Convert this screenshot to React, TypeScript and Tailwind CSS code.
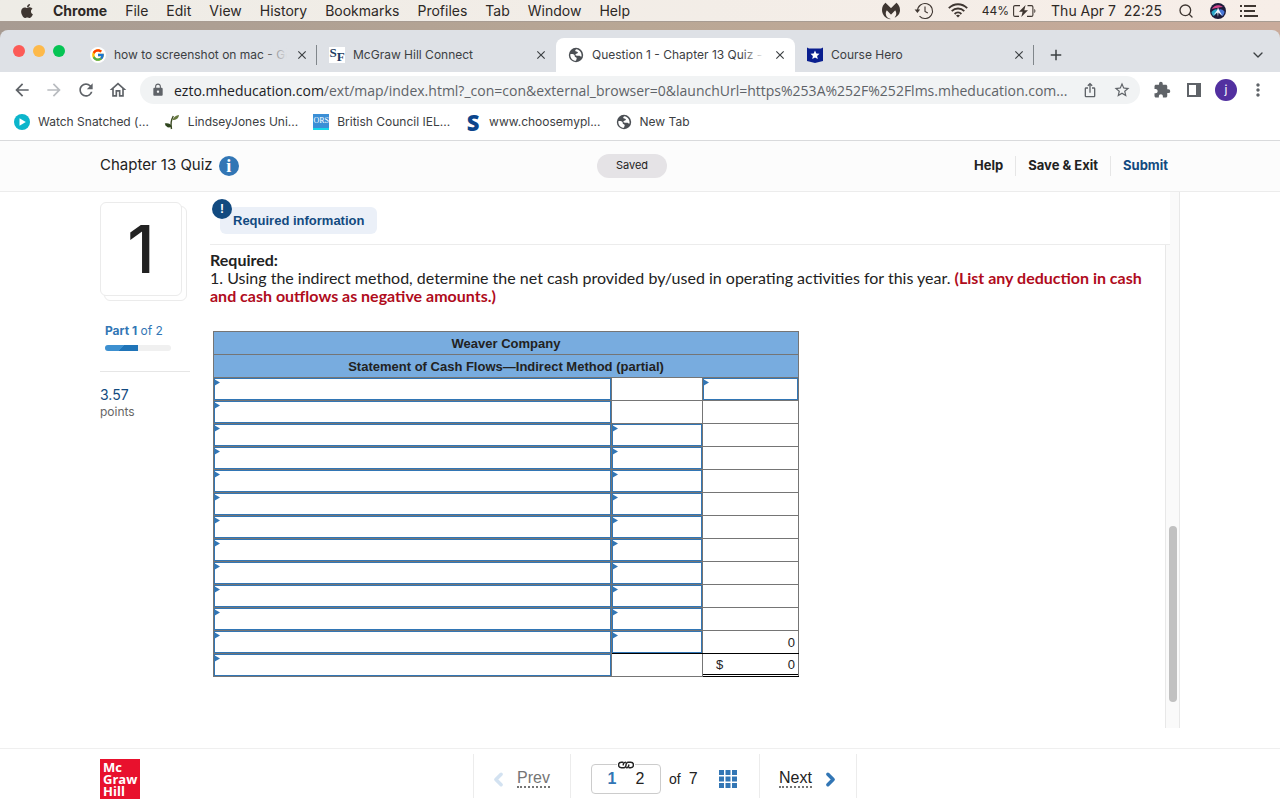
import { useState } from "react";
import type { ReactNode } from "react";
import clsx from "clsx";
import { FaApple } from "react-icons/fa";
import { FcGoogle } from "react-icons/fc";
import {
  MdAdd,
  MdArrowBack,
  MdArrowForward,
  MdClose,
  MdExtension,
  MdIosShare,
  MdLock,
  MdMoreVert,
  MdOutlineHome,
  MdRefresh,
  MdStarBorder,
} from "react-icons/md";
import { SiMalwarebytes } from "react-icons/si";
import { ChevronDown, ChevronLeft, ChevronRight, Search } from "lucide-react";

const menus = ["File", "Edit", "View", "History", "Bookmarks", "Profiles", "Tab", "Window", "Help"];

function GlobeIcon() {
  return (
    <svg viewBox="0 0 16 16" className="size-4 shrink-0">
      <circle cx="8" cy="8" r="7.2" fill="#4b4f54" />
      <path d="M8.2 2.2c-.9.6-1.3 1.6-.6 2.1.9.6 2.2.1 2.3 1.3.1 1-1.6 1-2.3 1.6-.6.6.3 1.500 1.300 1.500h2.100c1.200 0 1.500 1 2.600.7.300-2.800-1.200-6.600-5.400-7.200z" fill="#fff" />
      <path d="M2.300 7.200c1.400-.4 3.300-.2 4.100.8.7.9-.1 1.400.8 1.900.9.400 1.500.5 1.500 1.500 0 .9-.7 1.200-.6 2.300-3.300.2-6-2.500-5.800-6.500z" fill="#fff" />
    </svg>
  );
}

function SfIcon() {
  return (
    <span className="flex size-4 shrink-0 justify-center bg-white font-['Liberation_Serif',serif] text-[13px] font-bold leading-3 text-[#1d3c63]">
      <span className="self-start">S</span>
      <span className="self-end">F</span>
    </span>
  );
}

function ShieldIcon() {
  return (
    <svg viewBox="0 0 16 16" className="size-4 shrink-0">
      <path d="M0 0.500l2 1h12l2-1v13.500L8 16 0 14z" fill="#0a1f8f" />
      <path d="M8 3.500l1.300 3 3.200.3-2.400 2.100.7 3.200L8 10.400l-2.800 1.700.7-3.200-2.400-2.100 3.200-.3z" fill="#fff" />
    </svg>
  );
}

function PlayIcon() {
  return (
    <svg viewBox="0 0 16 16" className="size-4 shrink-0">
      <circle cx="8" cy="8" r="8" fill="#0cb5cb" />
      <path d="M5.500 4.200v7.600L11.800 8z" fill="#fff" />
    </svg>
  );
}

function LeafIcon() {
  return (
    <svg viewBox="0 0 16 16" className="size-4 shrink-0">
      <path d="M7.500 15C6.600 11 7 6 9.300 2" fill="none" stroke="#3b4a22" strokeWidth="1.400" />
      <path d="M8.500 6c1-3 3.500-4.600 6.500-5-.3 3-2.500 5-6.500 5z" fill="#66783f" />
      <path d="M7.500 12.500C6.800 9.500 4 9 .8 9.500 1.800 13 4.500 14.500 7.500 12.500z" fill="#2f451e" />
    </svg>
  );
}

function OrsIcon() {
  return (
    <span className="flex h-4 w-4 shrink-0 items-center justify-center border-b-2 border-[#18d7ea] bg-[#3b8fd6] font-['Liberation_Serif',serif] text-[8px] leading-none text-white">
      ORS
    </span>
  );
}

function SIcon() {
  return (
    <span className="block w-4 shrink-0 text-center font-['Open_Sans',sans-serif] text-[22px] font-extrabold leading-4 text-[#0b458c]">S</span>
  );
}

function HistoryIcon() {
  return (
    <svg viewBox="0 0 20 18" className="h-[18px] w-5" fill="none" stroke="#3e3631" strokeWidth="1.100">
      <path d="M3.500 9a7.500 7.500 0 1 1 2 5.100" />
      <path d="M11 4.500V9.500l2.800 1.500" />
      <path d="M.6 7.500h5.600L3.400 11z" fill="#3e3631" stroke="none" />
    </svg>
  );
}

function WifiIcon() {
  return (
    <svg viewBox="0 0 20 15" className="h-[15px] w-5" fill="none" stroke="#3e3631" strokeWidth="1.800">
      <path d="M.8 5.200C6-.1 14-.1 19.200 5.200" />
      <path d="M3.700 8.200c3.500-3.600 9.100-3.600 12.600 0" />
      <path d="M6.600 11c2-2 4.800-2 6.800 0" />
      <path d="M8 12.400c1.200-1 2.800-1 4 0L10 14.600z" fill="#3e3631" stroke="none" />
    </svg>
  );
}

function BatteryIcon() {
  return (
    <svg viewBox="0 0 24 12" className="h-3 w-6" fill="none" stroke="#3e3631" strokeWidth="1.100">
      <path d="M7 .6H2A1.400 1.400 0 0 0 .6 2v8A1.400 1.400 0 0 0 2 11.400h4" />
      <path d="M14.500.6h4A1.400 1.400 0 0 1 19.900 2v8a1.400 1.400 0 0 1-1.400 1.400H14" />
      <path d="M12.600 0L6 6.800h3.600L8.300 12 15 5.200h-3.700z" fill="#3e3631" stroke="none" />
      <path d="M21.300 4v4c1.400-.4 1.400-3.600 0-4z" fill="#3e3631" stroke="none" />
    </svg>
  );
}

function SiriIcon() {
  return (
    <svg viewBox="0 0 16 16" className="size-4">
      <circle cx="8" cy="8" r="8" fill="#1c1b3a" />
      <path d="M1.800 6C4 2 9 1 13 4c-3 .5-7 .5-11.200 2z" fill="#d7468c" />
      <path d="M1.500 9c3-3 5-3.500 6.500-1.500C7 10 5 12.500 3.500 13 2 11.500 1.500 10.500 1.500 9z" fill="#2aa7c9" />
      <path d="M14.500 8.500C12 6 10 5.500 8 7.500c1 3 3 5 4.500 5.500 1.200-1.200 1.900-2.500 2-4.500z" fill="#4876d6" />
      <path d="M8 4.500l1.500 3.500L12.500 13 8.500 9.500 8 14l-.8-4.500L3.500 12 7 7.500z" fill="#eef6ff" />
    </svg>
  );
}

function ListIcon() {
  return (
    <svg viewBox="0 0 18 12" className="h-3 w-[18px]" fill="#3e3631">
      <path d="M0 0h2v2H0zM0 5h2v2H0zM0 10h2v2H0zM4 0h12v2H4zM4 5h11v2H4zM4 10h14v2H4z" />
    </svg>
  );
}

function LinkIcon() {
  return (
    <svg viewBox="0 0 16 8" className="h-2 w-4" fill="none" stroke="#222" strokeWidth="1.400" strokeLinecap="round">
      <path d="M5.200 3.900C5.200 2.200 6 1.200 7.500 1.200" />
      <path d="M5 1.200H3.300a2.700 2.700 0 0 0 0 5.500h2.500C7.300 6.700 8 5.500 8 4s.7-2.800 2.200-2.800h2.500a2.700 2.700 0 0 1 0 5.500H11" />
      <path d="M10.800 4c0 1.700-.8 2.700-2.300 2.700" />
    </svg>
  );
}

function MacMenuBar() {
  return (
    <div className="flex h-[22px] items-center justify-between border-b border-[#a89c92] bg-linear-to-r from-[#eeece6] to-[#f7eee8] pl-[19px] pr-[22px] text-[14px] text-[#2d2825]">
      <nav className="flex items-center gap-[18px]">
        <FaApple className="size-4 text-[#3e3631]" />
        <button className="font-bold">Chrome</button>
        {menus.map((m) => (
          <button key={m}>{m}</button>
        ))}
      </nav>
      <div className="flex items-center gap-[14px]">
        <SiMalwarebytes className="size-[18px] text-[#3e3631]" />
        <HistoryIcon />
        <WifiIcon />
        <span className="flex items-center gap-1 text-[12px]">
          44% <BatteryIcon />
        </span>
        <span className="whitespace-pre">Thu Apr 7  22:25</span>
        <Search className="mx-[2px] size-4 text-[#3e3631]" strokeWidth={2} />
        <SiriIcon />
        <ListIcon />
      </div>
    </div>
  );
}

type TabProps = { icon: ReactNode; title: string; active?: boolean; divider?: boolean; fade?: boolean };

function BrowserTab({ icon, title, active, divider, fade }: TabProps) {
  return (
    <div
      className={clsx(
        "relative flex h-[34px] max-w-[239px] flex-1 items-center gap-2 pl-3 pr-2",
        active && "rounded-t-lg bg-white",
      )}
    >
      {icon}
      <button className="relative min-w-0 flex-1 overflow-hidden whitespace-nowrap text-left text-[12px] text-[#3c4043]">
        {title}
        {fade && (
          <span
            className={clsx(
              "absolute inset-y-0 right-0 w-6 bg-linear-to-r from-transparent",
              active ? "to-white" : "to-[#dee1e6]",
            )}
          />
        )}
      </button>
      <button aria-label={`Close ${title}`}>
        <MdClose className="size-[14px] text-[#3c4043]" />
      </button>
      {divider && <span className="absolute right-0 top-[7px] h-5 w-px bg-[#80868b]" />}
    </div>
  );
}

function TabStrip() {
  return (
    <div className="flex h-[42px] items-end rounded-t-lg bg-[#dee1e6]">
      <div className="flex w-[78px] shrink-0 gap-2 self-center pl-[13px]">
        <span className="size-3 rounded-full bg-[#fc5b57]" />
        <span className="size-3 rounded-full bg-[#fdb94a]" />
        <span className="size-3 rounded-full bg-[#05c454]" />
      </div>
      <BrowserTab
        icon={
          <span className="flex size-4 shrink-0 items-center justify-center rounded-full bg-white">
            <FcGoogle className="size-[14px]" />
          </span>
        }
        title="how to screenshot on mac - Go"
        divider
        fade
      />
      <BrowserTab icon={<SfIcon />} title="McGraw Hill Connect" />
      <BrowserTab icon={<GlobeIcon />} title="Question 1 - Chapter 13 Quiz -" active fade />
      <BrowserTab icon={<ShieldIcon />} title="Course Hero" divider />
      <button aria-label="New tab" className="flex h-[34px] w-11 items-center justify-center">
        <MdAdd className="size-[18px] text-[#3c4043]" />
      </button>
      <button aria-label="Search tabs" className="ml-auto flex h-[34px] w-11 items-center justify-center">
        <ChevronDown className="size-4 text-[#3c4043]" />
      </button>
    </div>
  );
}

function ToolButton({ label, children }: { label: string; children: ReactNode }) {
  return (
    <button aria-label={label} className="flex h-7 w-8 shrink-0 items-center justify-center text-[#5f6368]">
      {children}
    </button>
  );
}

function Toolbar() {
  return (
    <div className="flex h-9 items-center bg-white px-[6px]">
      <ToolButton label="Back"><MdArrowBack className="size-5" /></ToolButton>
      <ToolButton label="Forward"><MdArrowForward className="size-5 text-[#b9bcc0]" /></ToolButton>
      <ToolButton label="Reload"><MdRefresh className="size-5" /></ToolButton>
      <ToolButton label="Home"><MdOutlineHome className="size-5" /></ToolButton>
      <div className="mx-[6px] flex h-7 min-w-0 flex-1 items-center rounded-full bg-[#f1f3f4] pl-[11px] pr-[2px]">
        <MdLock className="size-[14px] shrink-0 text-[#5f6368]" />
        <div className="ml-[9px] min-w-0 flex-1 truncate font-['Open_Sans',sans-serif] text-[14px] text-[#5f6368]">
          <span className="text-[#202124]">ezto.mheducation.com</span>
          /ext/map/index.html?_con=con&amp;external_browser=0&amp;launchUrl=https%253A%252F%252Flms.mheducation.com...
        </div>
        <ToolButton label="Share"><MdIosShare className="size-4" /></ToolButton>
        <ToolButton label="Bookmark this tab"><MdStarBorder className="size-[18px]" /></ToolButton>
      </div>
      <ToolButton label="Extensions"><MdExtension className="size-[18px]" /></ToolButton>
      <ToolButton label="Side panel">
        <svg viewBox="0 0 14 14" className="size-[14px]">
          <path d="M0 0h14v14H0zM2 2v10h7V2z" fill="currentColor" fillRule="evenodd" />
        </svg>
      </ToolButton>
      <ToolButton label="Profile">
        <span className="flex size-[22px] items-center justify-center rounded-full bg-[#5230a0] text-[12px] text-white">j</span>
      </ToolButton>
      <ToolButton label="Menu"><MdMoreVert className="size-5" /></ToolButton>
    </div>
  );
}

const bookmarks = [
  { title: "Watch Snatched (...", icon: <PlayIcon /> },
  { title: "LindseyJones Uni...", icon: <LeafIcon /> },
  { title: "British Council IEL...", icon: <OrsIcon /> },
  { title: "www.choosemypl...", icon: <SIcon /> },
  { title: "New Tab", icon: <GlobeIcon /> },
];

function BookmarksBar() {
  return (
    <div className="flex h-[33px] items-center gap-[15px] border-b border-[#d9dadc] bg-white pb-1 pl-[14px] text-[12px] text-[#3c4043]">
      {bookmarks.map((b) => (
        <a key={b.title} href="#" className="flex items-center gap-2 whitespace-nowrap">
          {b.icon}
          {b.title}
        </a>
      ))}
    </div>
  );
}

function QuizHeader() {
  return (
    <header className="border-b border-[#ececec] bg-[#fcfcfc]">
      <div className="mx-[100px] grid h-[50px] grid-cols-[1fr_auto_1fr] items-center pr-3">
        <div className="flex items-center gap-[6px] pb-px text-[15px]">
          <h1>Chapter 13 Quiz</h1>
          <button
            aria-label="Assignment information"
            className="flex size-5 items-center justify-center rounded-full bg-[#3276b5] font-['Liberation_Serif',serif] text-[18px] font-bold leading-none text-white"
          >
            i
          </button>
        </div>
        <span className="mr-1 flex h-6 w-[70px] items-center justify-center rounded-full bg-[#e5e3e6] pb-[2px] text-[11px]">Saved</span>
        <div className="flex h-5 items-center justify-end divide-x divide-[#e6e6e6] text-[13px] font-bold">
          <button className="pr-3">Help</button>
          <button className="px-3">Save &amp; Exit</button>
          <button className="pl-3 text-[#124a80]">Submit</button>
        </div>
      </div>
    </header>
  );
}

function QuestionSidebar() {
  return (
    <aside className="w-[90px] shrink-0 pt-[10px]">
      <div className="relative h-[99px] w-[87px]">
        <div className="absolute bottom-0 right-0 h-[95px] w-[83px] rounded-md border border-[#ebebeb]" />
        <div className="absolute left-0 top-0 flex h-[94px] w-[82px] items-center justify-center rounded-md border border-[#ebebeb] bg-white text-[66px] font-medium leading-none text-[#222]">
          1
        </div>
      </div>
      <div className="ml-[5px] mt-5 text-[12px] leading-5 text-[#3276b5]">
        <b>Part 1</b> of 2
      </div>
      <div className="ml-[5px] mt-1 h-[6px] w-[66px] overflow-hidden rounded-full bg-[#f0f0f0]">
        <div className="h-full w-1/2 bg-linear-135 from-[#3d90d0] from-50% to-[#1f74b8] to-50%" />
      </div>
      <div className="mt-5 border-t border-[#e6e6e6] pt-[13px]">
        <p className="text-[14px] leading-5 text-[#124a80]">3.57</p>
        <p className="text-[12px] leading-[14px] text-[#666]">points</p>
      </div>
    </aside>
  );
}

function EntryCell({ label }: { label: string }) {
  return (
    <div className="relative">
      <input aria-label={label} className="block h-[22px] w-full border border-[#3276b5] bg-white px-1 outline-none" />
      <span className="absolute left-0 top-px h-[7px] w-[6px] bg-[#3276b5] [clip-path:polygon(0_0,100%_50%,0_100%)]" />
    </div>
  );
}

function CashFlowTable() {
  const rows = Array.from({ length: 13 }, (_, i) => i);
  const cell = "h-[23px] border border-[#757575] p-0";

  return (
    <table className="ml-[3px] mt-[26px] w-[585px] table-fixed border-collapse font-['Liberation_Sans',Arial,sans-serif] text-[13px] leading-4 text-[#222]">
      <colgroup>
        <col className="w-[398px]" />
        <col className="w-[91px]" />
        <col className="w-[96px]" />
      </colgroup>
      <thead className="bg-[#78acdf]">
        <tr>
          <th colSpan={3} className="h-[23px] border border-[#757575] p-0 pt-[2px]">Weaver Company</th>
        </tr>
        <tr>
          <th colSpan={3} className="h-[23px] border border-[#757575] p-0 pt-[2px]">Statement of Cash Flows—Indirect Method (partial)</th>
        </tr>
      </thead>
      <tbody>
        {rows.map((i) => (
          <tr key={i}>
            <td className={cell}>
              <EntryCell label={`Row ${i + 1} description`} />
            </td>
            <td className={clsx(cell, i === 11 && "border-b-black", i === 12 && "border-t-black")}>
              {i > 1 && i < 12 && <EntryCell label={`Row ${i + 1} amount`} />}
            </td>
            <td className={clsx(cell, i === 11 && "border-b-black", i === 12 && "border-y-black")}>
              {i === 0 && <EntryCell label="Row 1 total" />}
              {i === 11 && <div className="pr-[3px] pt-[2px] text-right">0</div>}
              {i === 12 && (
                <div className="mb-px flex h-[21px] items-center justify-between border-b border-black pl-[13px] pr-[3px] pt-[2px]">
                  <span>$</span>
                  <span>0</span>
                </div>
              )}
            </td>
          </tr>
        ))}
      </tbody>
    </table>
  );
}

function QuestionBody() {
  return (
    <section className="min-w-0 flex-1">
      <div className="relative -mr-[5px] h-[53px] border-b border-[#ececec] bg-white">
        <button className="relative ml-[10px] mt-[15px] h-[27px] rounded-md bg-[#ebf0f8] px-[13px] font-['Liberation_Sans',Arial,sans-serif] text-[13px] font-bold text-[#124a80]">
          Required information
          <span className="absolute -left-2 -top-2 flex size-5 items-center justify-center rounded-full bg-[#124a80] text-[12px] text-white">!</span>
        </button>
      </div>
      <div className="pr-4 pt-[6px] font-['Lato',sans-serif] text-[16px] leading-[18px]">
        <p className="font-bold">Required:</p>
        <p>
          1. Using the indirect method, determine the net cash provided by/used in operating activities for this year.{" "}
          <b className="text-[#b00b1c]">(List any deduction in cash and cash outflows as negative amounts.)</b>
        </p>
      </div>
      <CashFlowTable />
    </section>
  );
}

function ScrollTrack() {
  return (
    <div className="flex w-[15px] shrink-0 flex-col items-center border-x border-[#e8e8e8] bg-[#fafafa] pt-[334px]">
      <div className="h-44 w-2 rounded-full bg-[#c1c1c1]" />
    </div>
  );
}

function QuizFooter() {
  const [page, setPage] = useState(1);

  return (
    <footer className="border-t border-[#efefef] bg-white">
      <div className="mx-[100px] flex h-[51px] items-start font-['Liberation_Sans',Arial,sans-serif]">
        <a
          href="#"
          className="mt-[10px] flex size-10 shrink-0 flex-col justify-center bg-[#e8112d] pl-[3px] font-['Open_Sans',sans-serif] text-[13px] font-bold leading-3 text-white"
        >
          <span>Mc</span>
          <span>Graw</span>
          <span>Hill</span>
        </a>
        <nav className="mx-auto mt-[5px] flex h-11 items-center pl-[10px] text-[16px] text-[#222]">
          <button className="flex h-full w-[97px] items-center gap-2 border-l border-[#ececec] pl-[14px] pt-[6px] text-[#757575]">
            <ChevronLeft className="size-[21px] text-[#d3e2f1]" strokeWidth={4} />
            <span className="border-b-2 border-dotted border-[#757575] leading-4">Prev</span>
          </button>
          <div className="flex h-full w-[189px] items-center border-l border-[#ececec] pl-5 pt-[6px]">
            <div className="relative flex h-[30px] w-[70px] items-center justify-around rounded border border-[#ccc] px-[6px]">
              {[1, 2].map((n) => (
                <button key={n} onClick={() => setPage(n)} className={clsx(n === page && "font-bold text-[#3276b5]")}>
                  {n}
                </button>
              ))}
              <span className="absolute -top-1 left-[25px] bg-white px-px">
                <LinkIcon />
              </span>
            </div>
            <span className="ml-2 text-[14px]">of</span>
            <span className="ml-2">7</span>
            <button aria-label="Question grid" className="ml-[21px]">
              <svg viewBox="0 0 18 18" className="size-[18px]" fill="#3276b5">
                <path d="M0 0h5v5H0zM6.500 0h5v5h-5zM13 0h5v5h-5zM0 6.500h5v5H0zM6.500 6.500h5v5h-5zM13 6.500h5v5h-5zM0 13h5v5H0zM6.500 13h5v5h-5zM13 13h5v5h-5z" />
              </svg>
            </button>
          </div>
          <button className="flex h-full w-[98px] items-center gap-2 border-x border-[#ececec] pl-[19px] pt-[6px]">
            <span className="border-b-2 border-dotted border-[#757575] leading-4">Next</span>
            <ChevronRight className="size-[21px] text-[#3276b5]" strokeWidth={4} />
          </button>
        </nav>
      </div>
    </footer>
  );
}

export default function App() {
  return (
    <div className="flex min-h-screen flex-col bg-white font-['Inter',sans-serif]">
      <MacMenuBar />
      <div className="bg-linear-to-r from-[#a79b92] via-[#b9a795] to-[#c9ab9b] pt-2">
        <TabStrip />
      </div>
      <Toolbar />
      <BookmarksBar />
      <div className="flex flex-1 flex-col text-[#222]">
        <QuizHeader />
        <main className="mx-[100px] mb-5 flex flex-1 gap-5">
          <QuestionSidebar />
          <div className="flex min-w-0 flex-1">
            <QuestionBody />
            <ScrollTrack />
          </div>
        </main>
        <QuizFooter />
      </div>
    </div>
  );
}
